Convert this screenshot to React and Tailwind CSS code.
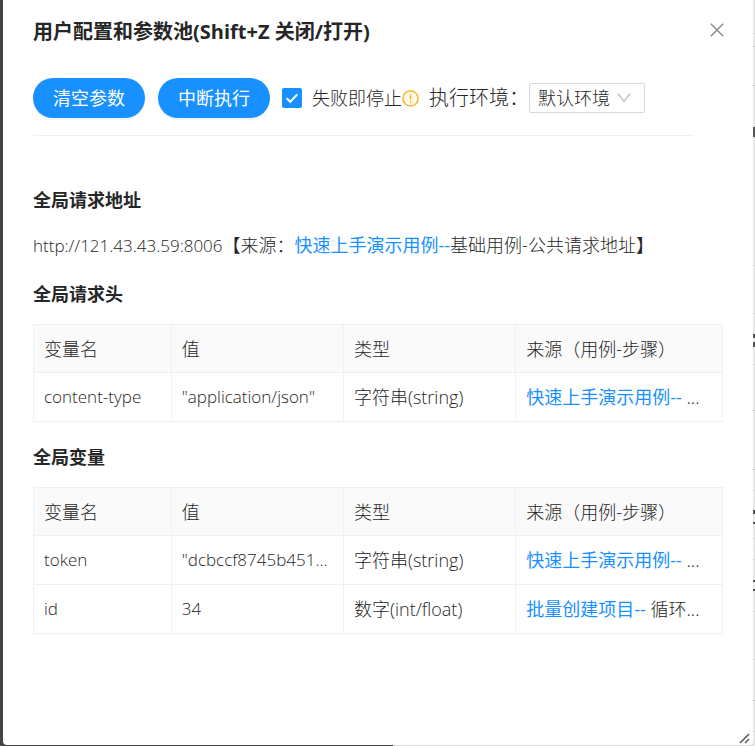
import { useState } from 'react'
import clsx from 'clsx'

const headerRows = [
  { name: 'content-type', value: '"application/json"', type: '字符串(string)', source: '快速上手演示用例--', step: '...' }
]

const variableRows = [
  { name: 'token', value: '"dcbccf8745b451...', type: '字符串(string)', source: '快速上手演示用例--', step: '...' },
  { name: 'id', value: '34', type: '数字(int/float)', source: '批量创建项目--', step: '循环...' }
]

const columns = [
  { title: '变量名', width: 'w-[20%]' },
  { title: '值', width: 'w-[25%]' },
  { title: '类型', width: 'w-[25%]' },
  { title: '来源（用例-步骤）', width: 'w-[30%]' }
]

// rules and text of the page that show beside the drawer
const edgeLines = [
  { top: 33, strong: false },
  { top: 46, strong: true },
  { top: 85, strong: true },
  { top: 265, strong: false },
  { top: 313, strong: false },
  { top: 364, strong: false },
  { top: 410, strong: true },
  { top: 469, strong: true },
  { top: 490, strong: false },
  { top: 538, strong: false },
  { top: 559, strong: false },
  { top: 611, strong: false },
  { top: 659, strong: false },
  { top: 700, strong: true },
  { top: 731, strong: false }
]

const edgeMarks = [
  { top: 127, height: 10 },
  { top: 334, height: 4 },
  { top: 342, height: 5 },
  { top: 510, height: 4 },
  { top: 522, height: 2 },
  { top: 580, height: 2 },
  { top: 589, height: 2 }
]

function PillButton({ children }) {
  return (
    <button type="button" className="h-10 w-28 rounded-full bg-[#1890ff] text-lg font-normal text-white shadow-[0_2px_0_rgba(0,0,0,0.045)]">
      {children}
    </button>
  )
}

function SectionTitle({ children }) {
  return <h3 className="text-lg leading-7 font-bold">{children}</h3>
}

function ParamTable({ rows }) {
  const cell = 'border border-[#f0f0f0] px-2.5 text-left font-light whitespace-nowrap'
  return (
    <table className="w-full table-fixed border-collapse text-lg leading-7">
      <thead>
        <tr className="h-12 bg-[#fafafa]">
          {columns.map((col) => (
            <th key={col.title} className={clsx(cell, col.width)}>{col.title}</th>
          ))}
        </tr>
      </thead>
      <tbody>
        {rows.map((row) => (
          <tr key={row.name} className="h-[49px]">
            <td className={clsx(cell, 'text-[17px]')}>{row.name}</td>
            <td className={clsx(cell, 'text-[17px]')}>{row.value}</td>
            <td className={cell}>{row.type}</td>
            <td className={cell}>
              <a href="#" className="font-normal text-[#1890ff]">{row.source}</a> {row.step}
            </td>
          </tr>
        ))}
      </tbody>
    </table>
  )
}

export default function App() {
  const [stopOnFail, setStopOnFail] = useState(true)

  return (
    <div className="relative flex min-h-screen bg-[linear-gradient(to_right,#444_52%,#dedede_52%)] pr-0.5 pb-px pl-[3px] font-['Open_Sans','Noto_Sans_CJK_SC',sans-serif] font-light text-[#262626]">
      <div className="absolute inset-y-0 right-0 w-0.5 overflow-hidden bg-[#e9e9e9]">
        {edgeLines.map((line) => (
          <div key={line.top} className={clsx('absolute h-px w-full', line.strong ? 'bg-[#c4c4c4]' : 'bg-[#dadada]')} style={{ top: line.top }} />
        ))}
        {edgeMarks.map((mark) => (
          <div key={mark.top} className="absolute right-0 w-0.5 bg-[#555]" style={{ top: mark.top, height: mark.height }} />
        ))}
      </div>

      <div className="relative w-full rounded-b-sm bg-white px-[30px] pt-4">
        <div className="flex items-start justify-between">
          <h2 className="text-xl leading-8 font-bold">用户配置和参数池(Shift+Z 关闭/打开)</h2>
          <button type="button" aria-label="关闭" className="mt-1.5 flex h-4 w-3 items-center justify-center">
            <svg width="14" height="14" viewBox="0 0 14 14" className="shrink-0" fill="none" stroke="#8c8c8c" strokeWidth="1.5">
              <path d="M.8.8l12.4 12.4M13.2.8L.8 13.2" />
            </svg>
          </button>
        </div>

        <div className="mt-[30px] mr-[30px] flex items-center border-b border-[#f0f0f0] pb-[17px]">
          <PillButton>清空参数</PillButton>
          <div className="w-[13px]" />
          <PillButton>中断执行</PillButton>
          <label className="ml-3 flex items-center gap-2.5 text-lg">
            <span className="relative flex">
              <input
                type="checkbox"
                checked={stopOnFail}
                onChange={(e) => setStopOnFail(e.target.checked)}
                className="size-5 appearance-none rounded-xs border border-[#d9d9d9] bg-white checked:border-[#1890ff] checked:bg-[#1890ff]"
              />
              {stopOnFail && (
                <svg width="20" height="20" viewBox="0 0 20 20" className="pointer-events-none absolute inset-0" fill="none" stroke="#fff" strokeWidth="2">
                  <path d="M4.7 10.2l3.6 3.6 7-7.4" />
                </svg>
              )}
            </span>
            失败即停止
          </label>
          <svg width="17" height="17" viewBox="0 0 17 17" className="shrink-0" fill="none">
            <circle cx="8.5" cy="8.5" r="7.6" fill="#fffbe6" stroke="#faad14" strokeWidth="1.4" />
            <path d="M8.5 4.4v5.2M8.5 11v1.6" stroke="#faad14" strokeWidth="1.4" />
          </svg>
          <label htmlFor="env" className="ml-2.5 text-xl">执行环境：</label>
          <div className="relative">
            <select id="env" className="block h-[30px] w-[116px] appearance-none rounded-xs border border-[#d9d9d9] bg-white pl-2 text-lg leading-7 font-light">
              <option>默认环境</option>
            </select>
            <svg width="14" height="10" viewBox="0 0 14 10" className="pointer-events-none absolute top-2.5 right-3.5" fill="none" stroke="#bfbfbf" strokeWidth="1.3">
              <path d="M1 .5l6 8 6-8" />
            </svg>
          </div>
        </div>

        <div className="mt-[50px]">
          <SectionTitle>全局请求地址</SectionTitle>
          <p className="mt-[17px] text-lg leading-7">
            <span className="text-[17px]">http://121.43.43.59:8006</span>【来源：<a href="#" className="font-normal text-[#1890ff]">快速上手演示用例--</a>基础用例-公共请求地址】
          </p>
        </div>

        <div className="mt-5">
          <SectionTitle>全局请求头</SectionTitle>
          <div className="mt-4">
            <ParamTable rows={headerRows} />
          </div>
        </div>

        <div className="mt-[21px]">
          <SectionTitle>全局变量</SectionTitle>
          <div className="mt-4">
            <ParamTable rows={variableRows} />
          </div>
        </div>

        <svg width="12" height="12" viewBox="0 0 12 12" className="absolute right-0.5 bottom-px" fill="none" stroke="#555" strokeWidth="1.5">
          <path d="M1 11L10 2M6 11l4-4" />
        </svg>
      </div>
    </div>
  )
}
